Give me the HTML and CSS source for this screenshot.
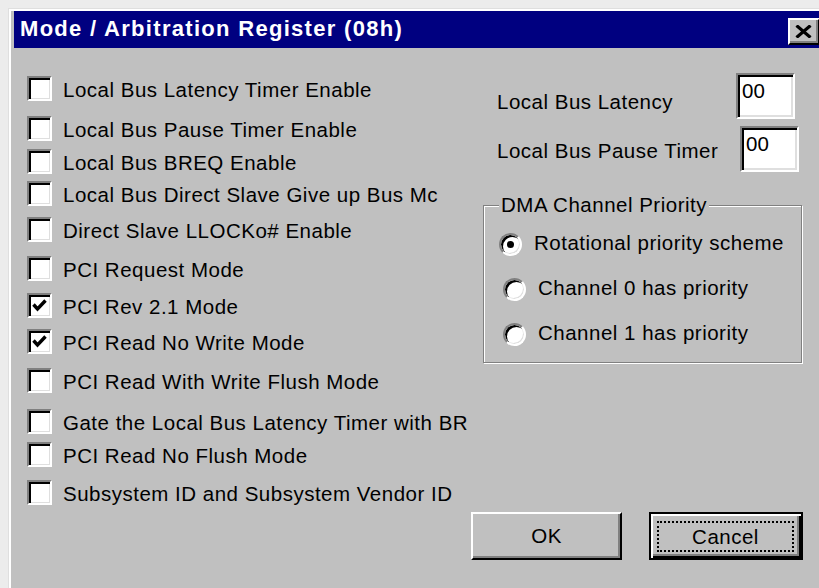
FILE: index.html
```html
<!DOCTYPE html>
<html lang="en">
<head>
<meta charset="utf-8">
<title>Mode / Arbitration Register (08h)</title>
<link rel="stylesheet" href="styles.css">
</head>
<body>
<div class="window">
  <div class="titlebar">
    <span class="title">Mode / Arbitration Register (08h)</span>
    <button class="close" type="button" aria-label="Close">
      <svg width="17" height="13" viewBox="0 0 17 13" aria-hidden="true"><path d="M1.5 0.5 L15.5 12.5 M15.5 0.5 L1.5 12.5" stroke="#000" stroke-width="3.2" fill="none"/></svg>
    </button>
  </div>
  <div class="dialog">
    <div class="options">
      <label class="opt"><span class="check"></span><span>Local Bus Latency Timer Enable</span></label>
      <label class="opt"><span class="check"></span><span>Local Bus Pause Timer Enable</span></label>
      <label class="opt"><span class="check"></span><span>Local Bus BREQ Enable</span></label>
      <label class="opt"><span class="check"></span><span>Local Bus Direct Slave Give up Bus Mc</span></label>
      <label class="opt"><span class="check"></span><span>Direct Slave LLOCKo# Enable</span></label>
      <label class="opt"><span class="check"></span><span>PCI Request Mode</span></label>
      <label class="opt"><span class="check checked"><svg width="21" height="21" viewBox="0 0 21 21" aria-hidden="true"><path d="M4.5 9.5 L8.5 14 L16.5 5.5" stroke="#000" stroke-width="3.4" fill="none"/></svg></span><span>PCI Rev 2.1 Mode</span></label>
      <label class="opt"><span class="check checked"><svg width="21" height="21" viewBox="0 0 21 21" aria-hidden="true"><path d="M4.5 9.5 L8.5 14 L16.5 5.5" stroke="#000" stroke-width="3.4" fill="none"/></svg></span><span>PCI Read No Write Mode</span></label>
      <label class="opt"><span class="check"></span><span>PCI Read With Write Flush Mode</span></label>
      <label class="opt"><span class="check"></span><span>Gate the Local Bus Latency Timer with BR</span></label>
      <label class="opt"><span class="check"></span><span>PCI Read No Flush Mode</span></label>
      <label class="opt"><span class="check"></span><span>Subsystem ID and Subsystem Vendor ID</span></label>
    </div>

    <div class="side">
      <div class="field-row latency">
        <span class="field-label">Local Bus Latency</span>
        <span class="field">00</span>
      </div>
      <div class="field-row pause">
        <span class="field-label">Local Bus Pause Timer</span>
        <span class="field">00</span>
      </div>

      <fieldset class="group">
        <legend>DMA Channel Priority</legend>
        <div class="radio-row"><span class="radio on"></span><span>Rotational priority scheme</span></div>
        <div class="radio-row shifted"><span class="radio"></span><span>Channel 0 has priority</span></div>
        <div class="radio-row shifted"><span class="radio"></span><span>Channel 1 has priority</span></div>
      </fieldset>

      <div class="buttons">
        <button class="btn" type="button">OK</button>
        <button class="btn default" type="button"><span class="focus">Cancel</span></button>
      </div>
    </div>
  </div>
</div>
</body>
</html>
```

FILE: styles.css
```css
html, body {
  margin: 0;
  height: 100%;
}

body {
  background: #ececec;
  overflow: hidden;
  font-family: "Liberation Sans", Arial, sans-serif;
  font-size: 20.5px;
  letter-spacing: 0.5px;
  color: #000;
}

/* Window frame */
.window {
  margin: 8px 0 0 8px;
  width: 808px;
  height: 600px;
  padding: 2px 5px 0;
  background: #c0c0c0;
  border-top: 1px solid #dfdfdf;
  border-left: 1px solid #dfdfdf;
  box-shadow: inset 2px 2px 0 #fff;
}

.titlebar {
  height: 37px;
  background: #000080;
  display: flex;
  align-items: center;
  justify-content: space-between;
  padding-left: 6px;
}

.title {
  color: #fff;
  font-weight: bold;
  font-size: 22px;
  letter-spacing: 1.3px;
  line-height: 24px;
  padding-bottom: 1px;
}

.close {
  width: 32px;
  height: 27px;
  margin-right: 2px;
  margin-top: 3px;
  padding: 0 0 0 5px;
  display: flex;
  align-items: center;
  background: #c0c0c0;
  border: 2px solid;
  border-color: #fff #000 #000 #fff;
  box-shadow: inset -2px -2px 0 #808080;
  box-sizing: border-box;
}

/* Dialog body */
.dialog {
  display: grid;
  grid-template-columns: 457px 1fr;
}

.options {
  padding: 29px 0 0 13px;
  display: grid;
  grid-template-rows: 40px 33px 32px 36px 39px 37px 36px 39px 41px 33px 38px 26px;
}

.opt {
  height: 26px;
  display: flex;
  align-items: center;
  gap: 11px;
  white-space: nowrap;
}

.check {
  flex: none;
  width: 25px;
  height: 25px;
  box-sizing: border-box;
  margin-top: -3px;
  background: #fff;
  border: 2px solid;
  border-color: #808080 #fff #fff #808080;
  box-shadow: inset 2px 2px 0 #000, inset -1px -1px 0 #dfdfdf;
  display: flex;
}

.check svg {
  display: block;
}

/* Right-hand column */
.side {
  padding-top: 25px;
}

.field-row {
  display: flex;
  align-items: center;
  height: 46px;
  padding-left: 26px;
}

.field-row.pause {
  margin-top: 7px;
}

.field-label {
  flex: none;
  line-height: 24px;
}

.latency .field-label {
  width: 239px;
  padding-top: 12px;
}

.pause .field-label {
  width: 243px;
  padding-top: 4px;
}

.field {
  width: 59px;
  height: 46px;
  box-sizing: border-box;
  background: #fff;
  border: 2px solid;
  border-color: #808080 #fff #fff #808080;
  box-shadow: inset 2px 2px 0 #000, inset -2px -2px 0 #dfdfdf;
  padding: 4px 0 0 4px;
  line-height: 24px;
  letter-spacing: 0;
}

.group {
  margin: 21px 0 0 12px;
  width: 319px;
  box-sizing: border-box;
  padding: 0 0 17px 15px;
  border: 1px solid #808080;
  box-shadow: inset 1px 1px 0 #fff, 1px 1px 0 #fff;
  display: flex;
  flex-direction: column;
  gap: 21px;
}

.group legend {
  padding: 0 2px;
  line-height: 24px;
  background: #c0c0c0;
}

.radio-row {
  height: 24px;
  display: flex;
  align-items: center;
  gap: 12px;
  white-space: nowrap;
}

.group legend + .radio-row {
  margin-top: 14px;
}

.radio-row.shifted {
  padding-left: 4px;
}

.radio {
  flex: none;
  position: relative;
  width: 23px;
  height: 23px;
  margin-top: 3px;
  box-sizing: border-box;
  border-radius: 50%;
  background: #fff;
  border: 2px solid;
  border-color: #808080 #fff #fff #808080;
  box-shadow: inset 2px 2px 0 #000, inset -1px -1px 0 #dfdfdf;
}

.radio.on::after {
  content: "";
  position: absolute;
  left: 6px;
  top: 6px;
  width: 7px;
  height: 7px;
  border-radius: 50%;
  background: #000;
}

/* Push buttons */
.buttons {
  display: flex;
  gap: 27px;
  margin-top: 149px;
}

.btn {
  width: 151px;
  height: 48px;
  box-sizing: border-box;
  padding: 0;
  background: #c0c0c0;
  font: inherit;
  letter-spacing: 0.5px;
  color: #000;
  border: 2px solid;
  border-color: #fff #000 #000 #fff;
  box-shadow: inset -2px -2px 0 #808080;
}

.btn.default {
  width: 154px;
  padding: 7px 7px 6px 6px;
  border-color: #000;
  box-shadow: inset 2px 2px 0 #fff, inset -2px -2px 0 #000, inset -4px -4px 0 #808080;
  display: flex;
}

.focus {
  flex: 1;
  display: flex;
  align-items: center;
  justify-content: center;
  border: 2px dotted #000;
}
```
